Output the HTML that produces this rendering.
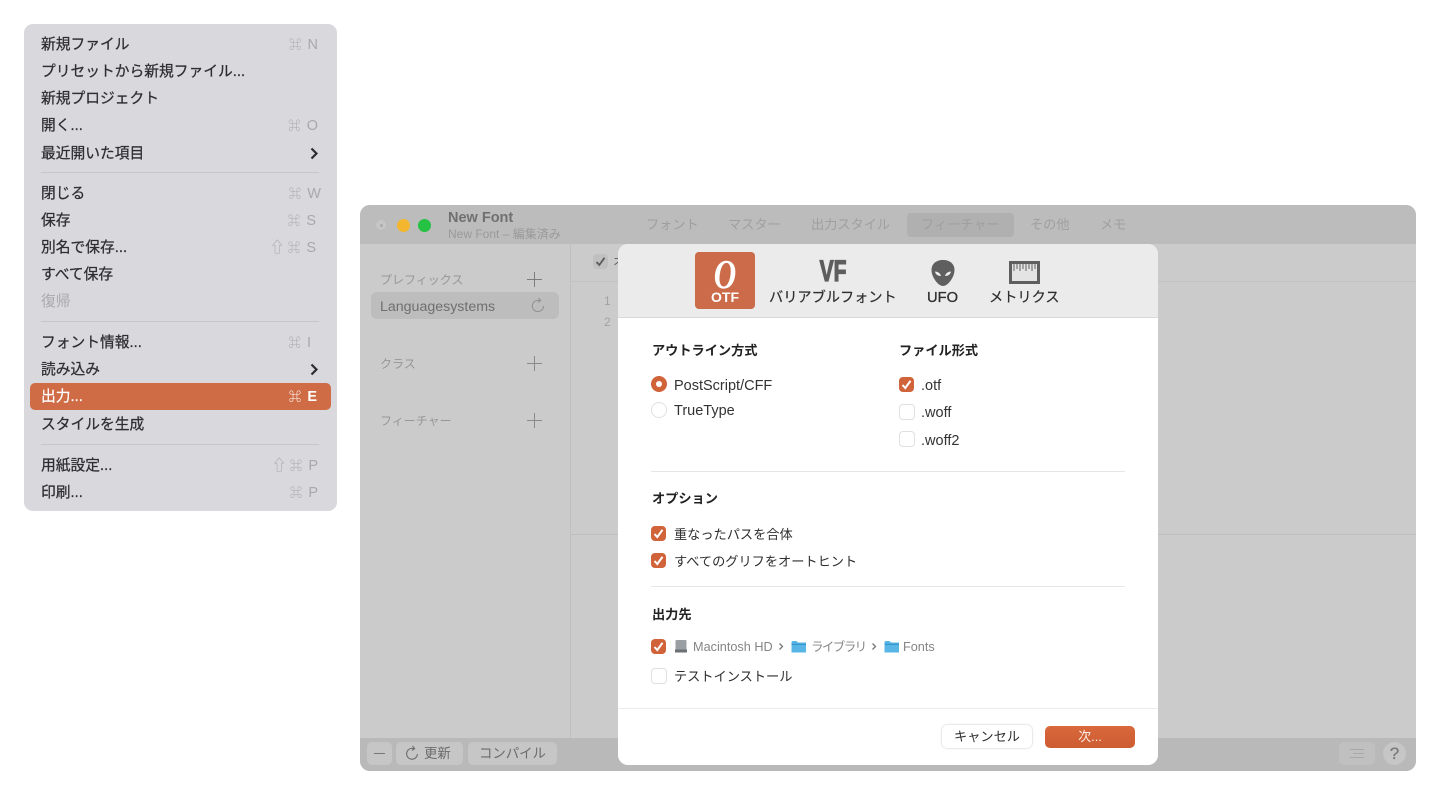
<!DOCTYPE html>
<html lang="ja"><head><meta charset="utf-8"><title>New Font</title>
<style>
html,body{margin:0;padding:0;background:#fff;width:1440px;height:810px;overflow:hidden}
body{position:relative;font-family:"Liberation Sans","Noto Sans CJK JP",sans-serif;filter:blur(.3px)}
div,svg{position:absolute}
.t{white-space:nowrap;line-height:20px;height:20px}
.m{font-size:14.75px;color:#2e2e30;-webkit-text-stroke:.25px #2e2e30;left:41px;margin-top:1px}
.s{font-size:14.5px;color:#a9a9ac;white-space:nowrap;line-height:20px;height:20px;text-align:right;width:70px;left:248px;margin-top:1px}
.s i{font-style:normal;font-size:12.5px;margin-right:2px}
.s i.u{font-size:15px;margin-right:3px}
.sep{left:41px;width:278px;height:1px;background:#c6c5ca}
.tab{font-size:13.2px;color:#9f9f9f;top:215px}
.side{font-size:12px;color:#979797}
.plus{width:15px;height:15px}
.d{font-size:14.5px;color:#333;margin-top:1px}
.h{font-size:13.2px;font-weight:bold;color:#222;margin-top:.5px}
.o{font-size:13.2px;color:#2f2f2f;margin-top:1px}
.cb{width:15px;height:15px;border-radius:4px;background:#d0633a;left:651px}
.cb0{width:14px;height:14px;border-radius:4px;background:#fff;border:1px solid #e0e0e0}
.hr{left:651px;width:474px;height:1px;background:#e6e6e6}
.lb{font-size:14.2px;color:#2f2f2f;-webkit-text-stroke:.2px #2f2f2f;top:288px}
.btn{background:#c6c6c6;border-radius:5px;top:742px;height:23px}
.bt{font-size:13.4px;color:#6b6b6b;top:744px}
.p{font-size:12.7px;color:#858585;top:637px}
</style></head><body>

<!-- Menu -->
<div style="left:24px;top:24px;width:313px;height:487px;background:#d9d8dd;border-radius:9px"></div>
<div style="left:30px;top:383px;width:301px;height:27px;background:#cf6b45;border-radius:5px"></div>
<div class="t m" style="top:34px">新規ファイル</div><div class="s" style="top:34px"><i>⌘</i> N</div>
<div class="t m" style="top:61px">プリセットから新規ファイル...</div>
<div class="t m" style="top:88px">新規プロジェクト</div>
<div class="t m" style="top:115px">開く...</div><div class="s" style="top:115px"><i>⌘</i> O</div>
<div class="t m" style="top:143px">最近開いた項目</div>
<svg style="left:309px;top:147px" width="10" height="13" viewBox="0 0 10 13"><path d="M2.5 1.5 7.5 6.5 2.500 11.5" fill="none" stroke="#2e2e30" stroke-width="2.2"/></svg>
<div class="sep" style="top:172px"></div>
<div class="t m" style="top:183px">閉じる</div><div class="s" style="top:183px;left:251px"><i>⌘</i> W</div>
<div class="t m" style="top:210px">保存</div><div class="s" style="top:210px;left:246px"><i>⌘</i> S</div>
<div class="t m" style="top:237px">別名で保存...</div><div class="s" style="top:237px;left:246px"><i class="u">⇧</i><i>⌘</i> S</div>
<div class="t m" style="top:264px">すべて保存</div>
<div class="t m" style="top:291px;color:#a9a9ac;-webkit-text-stroke:0">復帰</div>
<div class="sep" style="top:321px"></div>
<div class="t m" style="top:332px">フォント情報...</div><div class="s" style="top:332px;left:241px"><i>⌘</i> I</div>
<div class="t m" style="top:359px">読み込み</div>
<svg style="left:309px;top:363px" width="10" height="13" viewBox="0 0 10 13"><path d="M2.5 1.5 7.5 6.5 2.500 11.5" fill="none" stroke="#2e2e30" stroke-width="2.2"/></svg>
<div class="t m" style="top:386px;color:#fff;-webkit-text-stroke:.25px #fff">出力...</div><div class="s" style="top:386px;left:247px;color:#fff;font-weight:bold"><i>⌘</i> E</div>
<div class="t m" style="top:414px">スタイルを生成</div>
<div class="sep" style="top:444px"></div>
<div class="t m" style="top:455px">用紙設定...</div><div class="s" style="top:455px"><i class="u">⇧</i><i>⌘</i> P</div>
<div class="t m" style="top:482px">印刷...</div><div class="s" style="top:482px"><i>⌘</i> P</div>

<!-- Window -->
<div style="left:360px;top:205px;width:1056px;height:566px;background:#cbcbcb;border-radius:10px;overflow:hidden">
  <div style="left:0;top:0;width:1056px;height:39px;background:#bcbcbc"></div>
  <div style="left:0;top:533px;width:1056px;height:33px;background:#b9b9b9"></div>
  <div style="left:210px;top:39px;width:1px;height:494px;background:#c0c0c0"></div>
  <div style="left:211px;top:76px;width:845px;height:1px;background:#c2c2c2"></div>
  <div style="left:211px;top:329px;width:845px;height:1px;background:#bebebe"></div>
</div>
<div style="left:376px;top:220px;width:10px;height:10px;border-radius:50%;background:#c6c6c6"></div>
<div style="left:379.5px;top:223.5px;width:3px;height:3px;border-radius:50%;background:#ababab"></div>
<div style="left:397px;top:219px;width:13px;height:13px;border-radius:50%;background:#f3b62f"></div>
<div style="left:418px;top:219px;width:13px;height:13px;border-radius:50%;background:#25c244"></div>
<div class="t" style="left:448px;top:208px;font-size:14.5px;font-weight:bold;color:#707070">New Font</div>
<div class="t" style="left:448px;top:224px;font-size:12px;color:#9a9a9a">New Font – 編集済み</div>

<div style="left:907px;top:213px;width:107px;height:24px;background:#b0b0b0;border-radius:4px"></div>
<div class="t tab" style="left:646px">フォント</div>
<div class="t tab" style="left:728px">マスター</div>
<div class="t tab" style="left:811px">出力スタイル</div>
<div class="t tab" style="left:921px">フィーチャー</div>
<div class="t tab" style="left:1030px">その他</div>
<div class="t tab" style="left:1100px">メモ</div>

<!-- Sidebar -->
<div class="t side" style="left:380px;top:270px">プレフィックス</div>
<svg class="plus" style="left:527px;top:272px" viewBox="0 0 15 15"><path d="M7.500 0V15M0 7.500H15" stroke="#7c7c7c" stroke-width="1"/></svg>
<div style="left:371px;top:292px;width:188px;height:27px;background:#bdbdbd;border-radius:6px"></div>
<div class="t" style="left:380px;top:296px;margin-top:.5px;font-size:14.2px;color:#6f6f6f">Languagesystems</div>
<svg style="left:531px;top:297px" width="14" height="17" viewBox="0 0 14 17"><path d="M8.5 3.6A5.6 5.6 0 1 0 12.5 9M7.5 1 9.6 3.6 7 5.5" fill="none" stroke="#8f8f8f" stroke-width="1"/></svg>
<div class="t side" style="left:380px;top:354px">クラス</div>
<svg class="plus" style="left:527px;top:356px" viewBox="0 0 15 15"><path d="M7.500 0V15M0 7.500H15" stroke="#8a8a8a" stroke-width="1"/></svg>
<div class="t side" style="left:380px;top:411px">フィーチャー</div>
<svg class="plus" style="left:527px;top:413px" viewBox="0 0 15 15"><path d="M7.500 0V15M0 7.500H15" stroke="#8a8a8a" stroke-width="1"/></svg>

<!-- editor -->
<div style="left:593px;top:254px;width:15px;height:15px;border-radius:4px;background:#c0c0c0"></div>
<svg style="left:593px;top:254px" width="15" height="15" viewBox="0 0 15 15"><path d="M3.5 8 6.3 11 11.5 3.8" fill="none" stroke="#5a5a5a" stroke-width="1.8"/></svg>
<div class="t" style="left:613px;top:252px;font-size:13px;color:#666">オ</div>
<div class="t" style="left:604px;top:291px;font-size:12px;color:#a2a2a2">1</div>
<div class="t" style="left:604px;top:312px;font-size:12px;color:#a2a2a2">2</div>

<!-- Bottom bar -->
<div class="btn" style="left:367px;width:25px"></div>
<div style="left:374px;top:753px;width:11px;height:1px;background:#777"></div>
<div class="btn" style="left:396px;width:67px"></div>
<svg style="left:405px;top:744px" width="14" height="18" viewBox="0 0 14 18"><path d="M8.5 4.6A5.4 5.4 0 1 0 12.4 10M7.5 2 9.6 4.6 7 6.500" fill="none" stroke="#6b6b6b" stroke-width="1.1"/></svg>
<div class="t bt" style="left:424px">更新</div>
<div class="btn" style="left:468px;width:89px"></div>
<div class="t bt" style="left:479px">コンパイル</div>
<div class="btn" style="left:1339px;width:36px;background:#c0c0c0"></div>
<svg style="left:1348px;top:746px" width="18" height="15" viewBox="0 0 18 15"><path d="M2 3.500H16M5 7.500H16M2 11.500H16" stroke="#a8a8a8" stroke-width="1"/></svg>
<div style="left:1383px;top:742px;width:23px;height:23px;border-radius:50%;background:#c6c6c6"></div>
<div class="t" style="left:1383px;top:744px;width:23px;text-align:center;font-size:17px;color:#7c7c7c;-webkit-text-stroke:.3px #7c7c7c">?</div>

<!-- Dialog -->
<div style="left:618px;top:244px;width:540px;height:521px;background:#fff;border-radius:10px;overflow:hidden">
  <div style="left:0;top:0;width:540px;height:73px;background:#ebebeb;border-bottom:1px solid #d9d9d9"></div>
  <div style="left:0;top:464px;width:540px;height:1px;background:#ececec"></div>
</div>

<div style="left:695px;top:252px;width:60px;height:57px;background:#cb6b49;border-radius:4px"></div>
<div class="t" style="left:695px;top:257px;width:60px;height:34px;line-height:34px;text-align:center;font-family:'Liberation Serif',serif;font-style:italic;font-weight:bold;font-size:41px;color:#fff;transform:scaleX(.76)">O</div>
<div class="t" style="left:695px;top:287px;width:60px;text-align:center;font-size:14px;font-weight:bold;color:#fff">OTF</div>

<div class="t" style="left:800px;top:256px;width:66px;height:32px;line-height:32px;text-align:center;font-size:30px;font-weight:bold;color:#5e5e5e;-webkit-text-stroke:1.3px #5e5e5e;transform:scaleX(.7)">VF</div>
<div class="t lb" style="left:769px">バリアブルフォント</div>
<svg style="left:930px;top:259px" width="26" height="28" viewBox="0 0 26 28"><path d="M13 1C6 1 1.500 5 1.500 11C1.500 18 8 27 13 27C18 27 24.500 18 24.500 11C24.500 5 20 1 13 1Z" fill="#5f5f5f"/><path d="M5 12.500C8 12.500 10.500 14.500 11 17C8 17 5.500 15.500 5 12.500ZM21 12.500C18 12.500 15.500 14.500 15 17C18 17 20.500 15.500 21 12.500Z" fill="#eee"/></svg>
<div class="t lb" style="left:927px;font-size:14.7px;-webkit-text-stroke:.3px #2f2f2f">UFO</div>
<svg style="left:1009px;top:261px" width="31" height="23" viewBox="0 0 31 23"><rect x="1.500" y="1.500" width="28" height="20" fill="#e4e4e4" stroke="#5f5f5f" stroke-width="3"/><path d="M5 3V10M8 3V8M11 3V10M14 3V8M17 3V10M20 3V8M23 3V10M26 3V8" stroke="#5f5f5f" stroke-width="1"/></svg>
<div class="t lb" style="left:989px">メトリクス</div>

<div class="t h" style="left:652px;top:340px">アウトライン方式</div>
<div class="t h" style="left:899px;top:340px">ファイル形式</div>

<div style="left:651px;top:376px;width:16px;height:16px;border-radius:50%;background:#d0633a"></div>
<div style="left:656px;top:381px;width:6px;height:6px;border-radius:50%;background:#fff"></div>
<div class="t d" style="left:674px;top:375px">PostScript/CFF</div>
<div style="left:651px;top:402px;width:14px;height:14px;border-radius:50%;background:#fff;border:1px solid #e0e0e0"></div>
<div class="t d" style="left:674px;top:400px">TrueType</div>

<div class="cb" style="left:899px;top:377px"></div>
<svg style="left:899px;top:377px" width="15" height="15" viewBox="0 0 15 15"><path d="M3.500 8 6.300 11 11.500 3.800" fill="none" stroke="#fff" stroke-width="2"/></svg>
<div class="t d" style="left:921px;top:375px">.otf</div>
<div class="cb0" style="left:899px;top:404px"></div>
<div class="t d" style="left:921px;top:402px">.woff</div>
<div class="cb0" style="left:899px;top:431px"></div>
<div class="t d" style="left:921px;top:430px">.woff2</div>

<div class="hr" style="top:471px"></div>
<div class="t h" style="left:652px;top:488px">オプション</div>
<div class="cb" style="top:526px"></div>
<svg style="left:651px;top:526px" width="15" height="15" viewBox="0 0 15 15"><path d="M3.500 8 6.300 11 11.500 3.800" fill="none" stroke="#fff" stroke-width="2"/></svg>
<div class="t o" style="left:674px;top:524px">重なったパスを合体</div>
<div class="cb" style="top:553px"></div>
<svg style="left:651px;top:553px" width="15" height="15" viewBox="0 0 15 15"><path d="M3.500 8 6.300 11 11.500 3.800" fill="none" stroke="#fff" stroke-width="2"/></svg>
<div class="t o" style="left:674px;top:551px">すべてのグリフをオートヒント</div>

<div class="hr" style="top:586px"></div>
<div class="t h" style="left:652px;top:604px">出力先</div>
<div class="cb" style="top:639px"></div>
<svg style="left:651px;top:639px" width="15" height="15" viewBox="0 0 15 15"><path d="M3.500 8 6.300 11 11.500 3.800" fill="none" stroke="#fff" stroke-width="2"/></svg>
<svg style="left:674px;top:639px" width="14" height="15" viewBox="0 0 14 15"><rect x="1.500" y="1" width="11" height="10" rx="1" fill="#9a9fa3"/><rect x="1" y="10.500" width="12" height="3" fill="#6a7074"/></svg>
<div class="t p" style="left:693px">Macintosh HD</div>
<svg style="left:778px;top:642px" width="6" height="9" viewBox="0 0 6 9"><path d="M1.500 1.500 4.500 4.500 1.500 7.500" fill="none" stroke="#777" stroke-width="1.300"/></svg>
<svg style="left:791px;top:640px" width="15" height="13" viewBox="0 0 15 13"><path d="M.5 2.500Q.5 1 2 1H5.500L7 2.500H15V12.500H.5Z" fill="#58b6e6"/><rect x=".5" y="3.800" width="14.500" height="1" fill="#2f8fc6"/></svg>
<div class="t p" style="left:811px;font-size:12.5px;letter-spacing:-1.6px">ライブラリ</div>
<svg style="left:871px;top:642px" width="6" height="9" viewBox="0 0 6 9"><path d="M1.500 1.500 4.500 4.500 1.500 7.500" fill="none" stroke="#777" stroke-width="1.300"/></svg>
<svg style="left:884px;top:640px" width="15" height="13" viewBox="0 0 15 13"><path d="M.5 2.500Q.5 1 2 1H5.500L7 2.500H15V12.500H.5Z" fill="#58b6e6"/><rect x=".5" y="3.800" width="14.500" height="1" fill="#2f8fc6"/></svg>
<div class="t p" style="left:903px">Fonts</div>
<div class="cb0" style="left:651px;top:668px"></div>
<div class="t o" style="left:674px;top:666px">テストインストール</div>

<div style="left:942px;top:725px;width:90px;height:23px;border-radius:5px;background:#fff;box-shadow:0 0 2px rgba(0,0,0,.25)"></div>
<div class="t" style="left:942px;top:727px;width:90px;text-align:center;font-size:13.2px;color:#2f2f2f">キャンセル</div>
<div style="left:1045px;top:726px;width:90px;height:22px;border-radius:5px;background:linear-gradient(#d9683c,#cc5c31)"></div>
<div class="t" style="left:1045px;top:727px;width:90px;text-align:center;font-size:13px;color:#fbeee8">次...</div>

</body></html>
